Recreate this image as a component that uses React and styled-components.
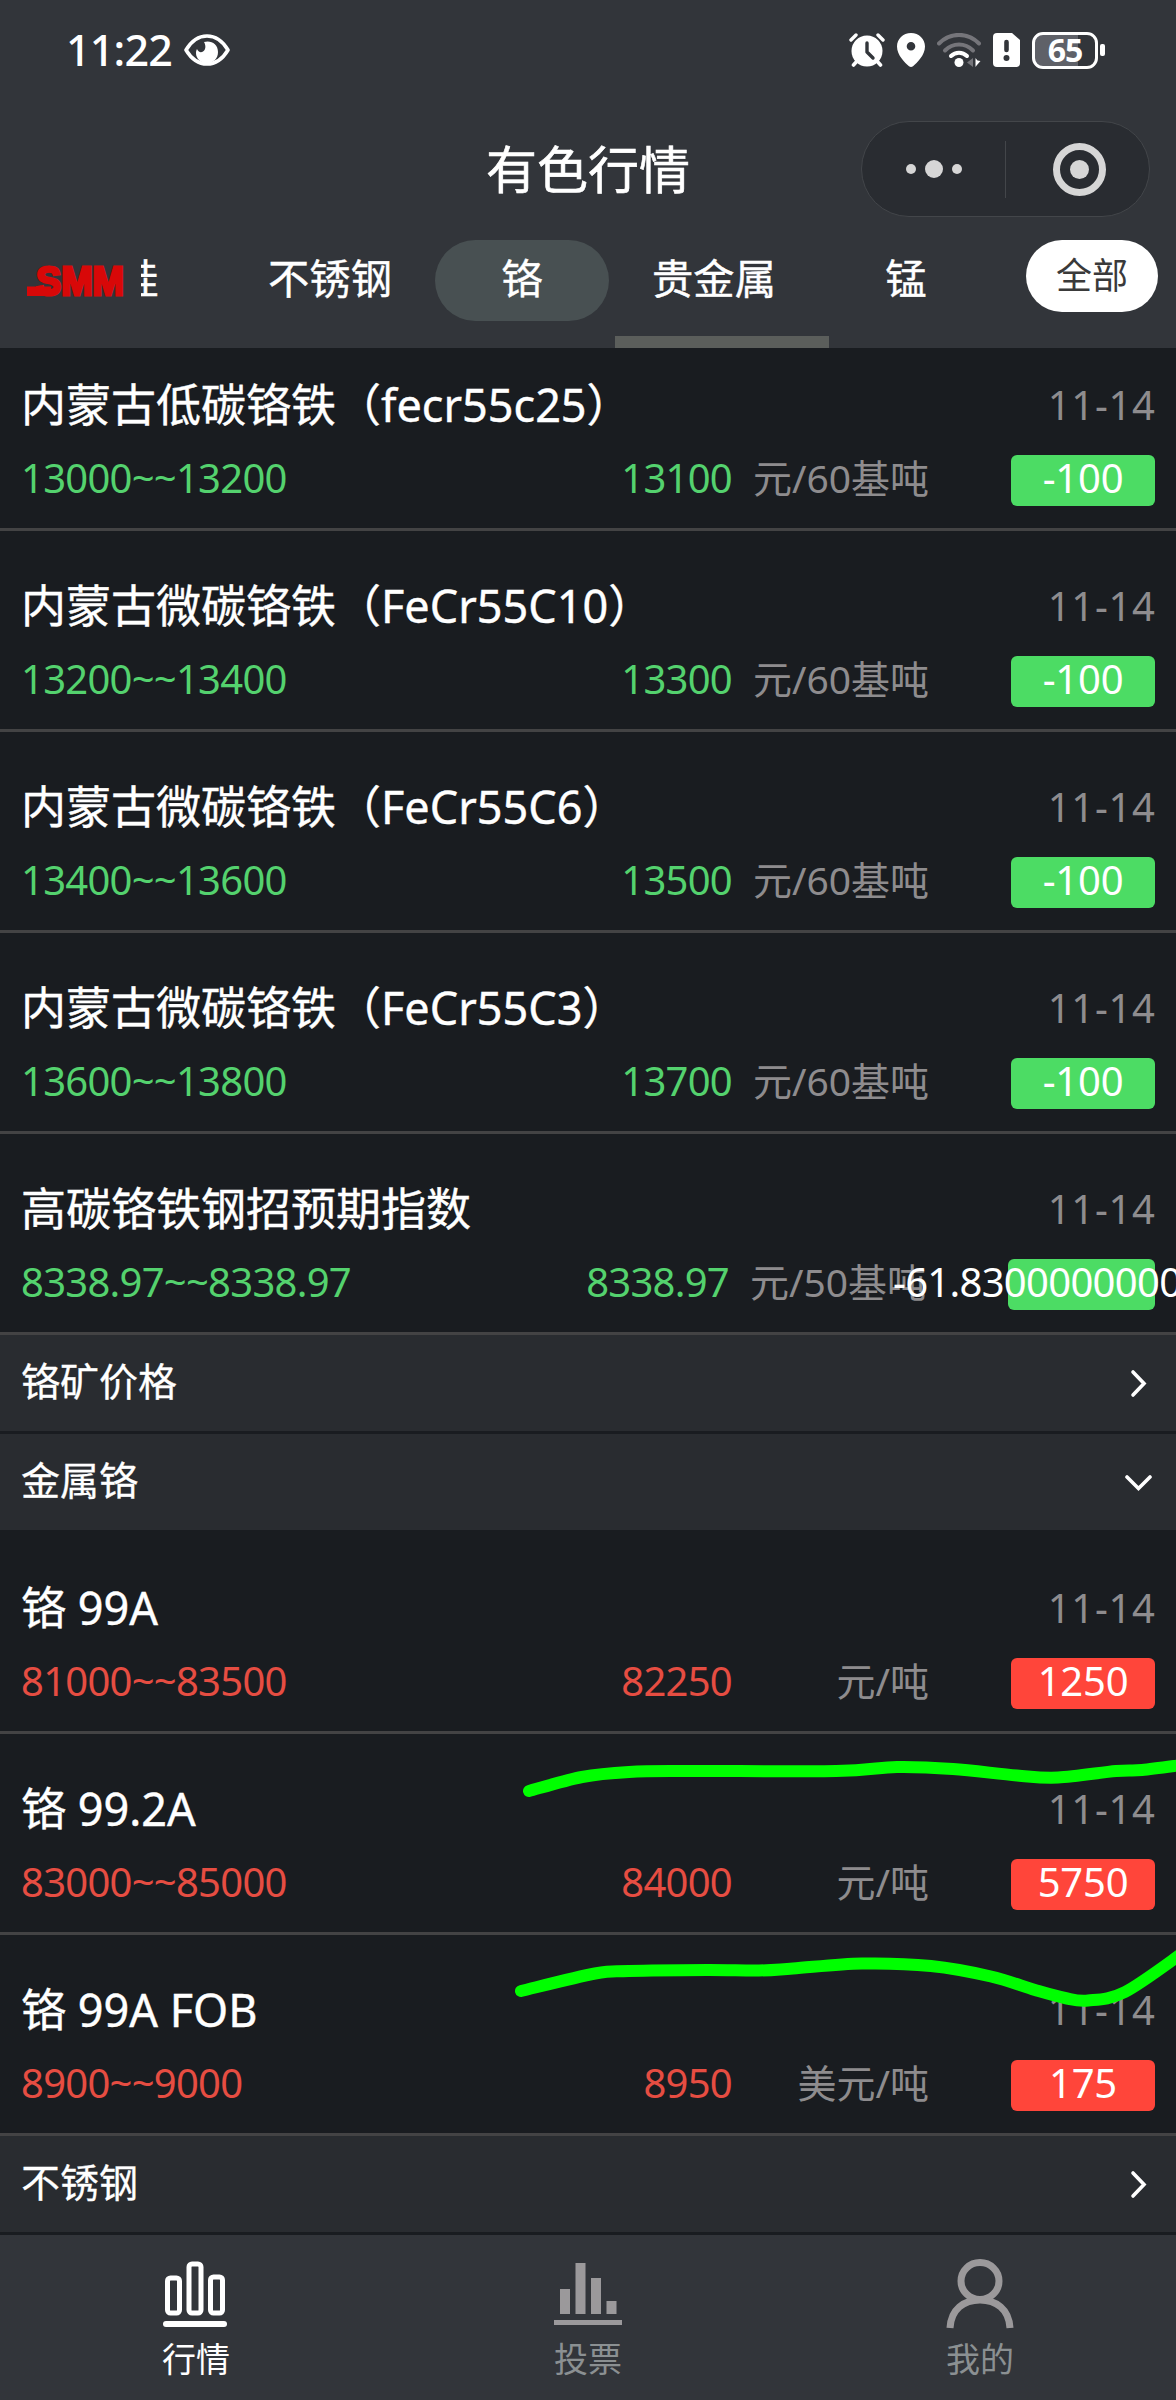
import React from 'react';
import styled, {createGlobalStyle} from 'styled-components';

const GlobalStyle = createGlobalStyle
    `
      * {
        box-sizing: border-box;
      }

      body {
        margin: 0;
        background: #191c20;
        font-family: "Noto Sans", "Noto Sans CJK SC", sans-serif;
      }
    `;

const Screen = styled.div
    `
      position: relative;
      display: flex;
      flex-direction: column;
      width: 1176px;
      height: 2400px;
      overflow: hidden;
      background: #191c20;
      color: #fff;
    `;

const Header = styled.header
    `
      display: flex;
      flex-direction: column;
      flex: none;
      height: 348px;
      background: #32353a;
    `;

const StatusBar = styled.div
    `
      display: flex;
      align-items: center;
      height: 100px;
      padding: 0 71px 0 66px;
    `;

const Clock = styled.span
    `
      width: 118px;
      font-size: 43px;
      font-weight: 500;
      letter-spacing: -0.8px;
      line-height: 100px;
    `;

const StatusIcons = styled.div
    `
      display: flex;
      align-items: center;
      gap: 12px;
      margin-left: auto;
    `;

const Battery = styled.div
    `
      display: flex;
      align-items: center;
      justify-content: center;
      width: 66px;
      height: 37px;
      border: 3px solid #fff;
      border-radius: 11px;
      background: linear-gradient(90deg, #5f6168 72%, transparent 72%);
      font-size: 32px;
      font-weight: 700;
      letter-spacing: -1px;
      line-height: 30px;
    `;

const BatteryGroup = styled.div
    `
      display: flex;
      align-items: center;
      gap: 2px;
    `;

const BatteryTip = styled.div
    `
      width: 5px;
      height: 12px;
      border-radius: 2px;
      background: #fff;
    `;

const TitleBar = styled.div
    `
      display: grid;
      grid-template-columns: 1fr auto 1fr;
      align-items: center;
      height: 138px;
      padding: 0 26px;
    `;

const PageTitle = styled.h1
    `
      grid-column: 2;
      margin: 0;
      font-size: 51px;
      font-weight: 400;
      line-height: 70px;
      -webkit-text-stroke: 0.6px #fff;
    `;

const Capsule = styled.div
    `
      display: flex;
      align-items: center;
      justify-self: end;
      width: 289px;
      height: 96px;
      border: 1px solid #43464a;
      border-radius: 48px;
      background: #292c31;
    `;

const CapsuleButton = styled.div
    `
      display: flex;
      flex: 1;
      align-items: center;
      justify-content: center;
      gap: 9px;
    `;

const CapsuleDivider = styled.div
    `
      width: 1px;
      height: 57px;
      background: #43464a;
    `;

const Dot = styled.span
    `
      width: ${({$size}) => $size}px;
      height: ${({$size}) => $size}px;
      border-radius: 50%;
      background: #d6d6d6;
    `;

const Ring = styled.span
    `
      display: flex;
      align-items: center;
      justify-content: center;
      width: 53px;
      height: 53px;
      margin-left: 4px;
      border: 7px solid #d6d6d6;
      border-radius: 50%;
    `;

const Navigation = styled.nav
    `
      display: flex;
      height: 110px;
      padding: 2px 18px 0 27px;
    `;

const TabViewport = styled.div
    `
      width: 867px;
      margin-left: 14px;
      overflow: hidden;
    `;

const TabStrip = styled.div
    `
      display: flex;
      width: 960px;
      margin-left: -99px;
    `;

const Tab = styled.div
    `
      flex: none;
      width: 174px;
      height: 81px;
      margin: 0 9px;
      border-radius: 41px;
      background: ${({$active}) => $active ? '#485052' : 'transparent'};
      font-size: 41.300px;
      line-height: 76px;
      text-align: center;
      white-space: nowrap;
      -webkit-text-stroke: 0.4px #fff;
    `;

const TabIndicator = styled.div
    `
      width: 214px;
      height: 12px;
      margin-top: 15px;
      margin-left: 474px;
      background: #5b5e5b;
    `;

const AllButton = styled.button
    `
      width: 132px;
      height: 72px;
      margin-left: 18px;
      padding: 0;
      border: 0;
      border-radius: 36px;
      background: #fff;
      color: #3a3a3a;
      font-family: inherit;
      font-size: 36px;
      line-height: 68px;
    `;

const List = styled.main
    `
      flex: none;
      height: 1887px;
      overflow: hidden;
    `;

// the list is scrolled a little, so the first quote starts under the header
const ListContent = styled.div
    `
      margin-top: -18px;
    `;

const Quote = styled.section
    `
      display: flex;
      flex-direction: column;
      height: 201px;
      padding: 44px 21px 0;
      border-bottom: 3px solid #434344;
    `;

const QuoteHead = styled.div
    `
      display: flex;
      align-items: center;
      justify-content: space-between;
      height: 61px;
    `;

const QuoteName = styled.h2
    `
      margin: 0;
      font-size: 45px;
      font-weight: 400;
      line-height: 61px;
      white-space: nowrap;
      -webkit-text-stroke: 0.4px #fff;
    `;

const QuoteDate = styled.span
    `
      margin-right: -0.7px;
      color: #8e8c8e;
      font-size: 40px;
      letter-spacing: 0.7px;
      line-height: 58px;
    `;

const QuoteBody = styled.div
    `
      display: grid;
      grid-template-columns: 430px ${({$wide}) => $wide ? 278 : 281}px 197px 1fr;
      align-items: center;
      height: 51px;
      margin-top: 20px;
    `;

const Amount = styled.span
    `
      height: 51px;
      color: ${({$up}) => $up ? '#e64d42' : '#54d26e'};
      font-size: 40px;
      letter-spacing: -0.74px;
      line-height: 46px;
      text-align: ${({$align}) => $align || 'left'};
      white-space: nowrap;
    `;

const Unit = styled.span
    `
      height: 51px;
      color: #8e8c8e;
      font-size: 39px;
      line-height: 45px;
      text-align: right;
      white-space: nowrap;
    `;

const Change = styled.span
    `
      display: flex;
      justify-content: center;
      justify-self: end;
      width: ${({$wide}) => $wide ? 147 : 144}px;
      height: 51px;
      border-radius: 6px;
      background: ${({$up}) => $up ? '#ff453a' : '#4cdc64'};
      font-size: 40px;
      letter-spacing: ${({$wide}) => $wide ? -0.7 : -0.2}px;
      line-height: 46px;
      white-space: nowrap;
    `;

const Group = styled.div
    `
      display: flex;
      align-items: center;
      justify-content: space-between;
      height: 96px;
      margin-bottom: 3px;
      padding: 0 21px;
      background: #292c30;
    `;

const GroupName = styled.h3
    `
      height: 96px;
      margin: 0;
      font-size: 39px;
      font-weight: 400;
      line-height: 91px;
      -webkit-text-stroke: 0.3px #fff;
    `;

const TabBar = styled.footer
    `
      display: flex;
      flex: 1;
      background: #32353a;
    `;

const TabBarItem = styled.div
    `
      display: flex;
      flex: 1;
      flex-direction: column;
      align-items: center;
      padding-top: 24px;
      color: ${({$active}) => $active ? '#fff' : '#8b9092'};
      font-size: 34px;
      line-height: 60px;
    `;

const Marker = styled.svg
    `
      position: absolute;
      top: 1740px;
      left: 500px;
      pointer-events: none;
    `;

const tabs = ['硅', '不锈钢', '铬', '贵金属', '锰'];

const chromeAlloys = [
    {name: '内蒙古低碳铬铁（fecr55c25）', range: '13000~~13200', price: '13100', unit: '元/60基吨', change: '-100'},
    {name: '内蒙古微碳铬铁（FeCr55C10）', range: '13200~~13400', price: '13300', unit: '元/60基吨', change: '-100'},
    {name: '内蒙古微碳铬铁（FeCr55C6）', range: '13400~~13600', price: '13500', unit: '元/60基吨', change: '-100'},
    {name: '内蒙古微碳铬铁（FeCr55C3）', range: '13600~~13800', price: '13700', unit: '元/60基吨', change: '-100'},
    {
        name: '高碳铬铁钢招预期指数', range: '8338.97~~8338.97', price: '8338.97', unit: '元/50基吨',
        change: '-61.83000000000000', wide: true,
    },
];

const chromeMetals = [
    {name: '铬 99A', range: '81000~~83500', price: '82250', unit: '元/吨', change: '1250', up: true},
    {name: '铬 99.2A', range: '83000~~85000', price: '84000', unit: '元/吨', change: '5750', up: true},
    {name: '铬 99A FOB', range: '8900~~9000', price: '8950', unit: '美元/吨', change: '175', up: true},
];

const strokes = [
    [[529, 1791], [582, 1777], [629, 1772], [685, 1771], [836, 1771], [897, 1767], [953, 1769], [1017, 1775.5],
        [1058, 1777.5], [1116, 1771], [1142, 1770], [1182, 1765]],
    [[521, 1991], [595, 1973.5], [629, 1971], [707, 1970], [759, 1970.5], [793, 1968.5], [862, 1963.5], [931, 1966],
        [991, 1976.5], [1035, 1990], [1065, 1998], [1088, 2000.5], [1125, 1992], [1184, 1952]],
];

function smoothPath(points) {
    let d = `M${points[0][0]} ${points[0][1]}`;
    for (let i = 0; i < points.length - 1; i++) {
        const p0 = points[i - 1] || points[i];
        const p1 = points[i];
        const p2 = points[i + 1];
        const p3 = points[i + 2] || p2;
        d += ` C${p1[0] + (p2[0] - p0[0]) / 6} ${p1[1] + (p2[1] - p0[1]) / 6}`
            + ` ${p2[0] - (p3[0] - p1[0]) / 6} ${p2[1] - (p3[1] - p1[1]) / 6} ${p2[0]} ${p2[1]}`;
    }
    return d;
}

function EyeIcon() {
    return (
        <svg width="46" height="32" viewBox="0 0 46 32" fill="none">
            <path d="M2 16C8 6 15 2 23 2s15 4 21 14c-6 10-13 14-21 14S8 26 2 16z" stroke="#fff" strokeWidth="3.6"
                  strokeLinejoin="round"/>
            <path d="M20 8c7-2 14 2 14 10 0 7-5 11-11 11s-11-4-11-10c0-2 .5-3 1-4 1 3 4 4 6 2.500 3-2 3-6 1-9.500z"
                  fill="#fff"/>
        </svg>
    );
}

function AlarmIcon() {
    return (
        <svg width="36" height="34" viewBox="0 0 36 34" fill="none" strokeLinecap="round">
            <path d="M2 7l5-5M34 7l-5-5" stroke="#fff" strokeWidth="3.400"/>
            <path d="M9 27l-4.500 5M27 27l4.500 5" stroke="#fff" strokeWidth="3.600"/>
            <circle cx="18" cy="18" r="15.500" fill="#fff"/>
            <path d="M18 10v9l6 6" stroke="#32353a" strokeWidth="3.400" strokeLinejoin="round"/>
        </svg>
    );
}

function LocationIcon() {
    return (
        <svg width="28" height="34" viewBox="0 0 28 34">
            <path fillRule="evenodd" fill="#fff"
                  d="M14 0c8 0 14 6 14 13.500C28 22 20 30 16 33.300q-2 1.400-4 0C8 30 0 22 0 13.500 0 6 6 0 14 0zm0 9a4.300 4.300 0 1 0 0 8.600 4.300 4.300 0 0 0 0-8.600z"/>
        </svg>
    );
}

function WifiIcon() {
    return (
        <svg width="44" height="34" viewBox="0 0 44 34" fill="none" strokeLinecap="round" strokeWidth="4">
            <path d="M2 10.500C13-1 31-1 42 10.500" stroke="#75757a"/>
            <path d="M8 17.500c8-8 20-8 28 0" stroke="#75757a"/>
            <path d="M14 23c4.500-4.500 11.500-4.500 16 0" stroke="#fff"/>
            <circle cx="22" cy="29.500" r="4.500" fill="#fff"/>
            <path d="M36 25v9l-6-4.500z" fill="#75757a"/>
            <path d="M38.500 25v9l1.500-2 3.500-4-3-.500z" fill="#fff"/>
        </svg>
    );
}

function SimIcon() {
    return (
        <svg width="27" height="34" viewBox="0 0 27 34" fill="none">
            <path d="M4 0h15l8 7v23a4 4 0 0 1-4 4H4a4 4 0 0 1-4-4V4a4 4 0 0 1 4-4z" fill="#fff"/>
            <path d="M13.500 9v8" stroke="#32353a" strokeWidth="4.600" strokeLinecap="round"/>
            <circle cx="13.500" cy="25" r="3" fill="#32353a"/>
        </svg>
    );
}

function Logo() {
    return (
        <svg width="100" height="81" viewBox="0 0 100 81">
            <rect x="0" y="46.500" width="24" height="9.500" fill="#d80808"/>
            <text x="9" y="54.500" textLength="88" lengthAdjust="spacingAndGlyphs" fill="#d80808" stroke="#d80808"
                  strokeWidth="3" fontFamily="Liberation Sans" fontWeight="700" fontSize="40">SMM
            </text>
        </svg>
    );
}

function Chevron({open}) {
    return open ? (
        <svg width="30" height="30" viewBox="0 0 30 30" fill="none" stroke="#fff" strokeWidth="3.600"
             strokeLinecap="round">
            <path d="M2 10l11.500 11.500L25 10"/>
        </svg>
    ) : (
        <svg width="30" height="30" viewBox="0 0 30 30" fill="none" stroke="#fff" strokeWidth="3.600"
             strokeLinecap="round">
            <path d="M8 4l11 11.500L8 27"/>
        </svg>
    );
}

function MarketIcon() {
    return (
        <svg width="68" height="70" viewBox="0 0 68 70" fill="none" stroke="#fff" strokeWidth="5">
            <rect x="5.500" y="19" width="12" height="35" rx="3"/>
            <rect x="27" y="5" width="12" height="49" rx="3"/>
            <rect x="48.500" y="18" width="12" height="36" rx="3"/>
            <path d="M4 65h58" strokeWidth="6" strokeLinecap="round"/>
        </svg>
    );
}

function VoteIcon() {
    return (
        <svg width="68" height="70" viewBox="0 0 68 70" fill="#9b999b">
            <rect x="6" y="30" width="10" height="25"/>
            <rect x="21.500" y="4" width="10" height="51"/>
            <rect x="37" y="19" width="10" height="36"/>
            <rect x="52.500" y="42" width="10" height="13"/>
            <rect x="0" y="61" width="68" height="5"/>
        </svg>
    );
}

function UserIcon() {
    return (
        <svg width="68" height="70" viewBox="0 0 68 70" fill="none" stroke="#9b999b" strokeWidth="7">
            <ellipse cx="34" cy="22" rx="19" ry="18.500"/>
            <path d="M4 69C5 50 18 41 34 41s29 9 30 28"/>
        </svg>
    );
}

function QuoteRow({name, range, price, unit, change, up, wide}) {
    return (
        <Quote>
            <QuoteHead>
                <QuoteName>{name}</QuoteName>
                <QuoteDate>11-14</QuoteDate>
            </QuoteHead>
            <QuoteBody $wide={wide}>
                <Amount $up={up}>{range}</Amount>
                <Amount $up={up} $align="right">{price}</Amount>
                <Unit>{unit}</Unit>
                <Change $up={up} $wide={wide}>{change}</Change>
            </QuoteBody>
        </Quote>
    );
}

function GroupRow({label, open}) {
    return (
        <Group>
            <GroupName>{label}</GroupName>
            <Chevron open={open}/>
        </Group>
    );
}

function App() {
    return (
        <Screen>
            <GlobalStyle/>
            <Header>
                <StatusBar>
                    <Clock>11:22</Clock>
                    <EyeIcon/>
                    <StatusIcons>
                        <AlarmIcon/>
                        <LocationIcon/>
                        <WifiIcon/>
                        <SimIcon/>
                        <BatteryGroup>
                            <Battery>65</Battery>
                            <BatteryTip/>
                        </BatteryGroup>
                    </StatusIcons>
                </StatusBar>
                <TitleBar>
                    <PageTitle>有色行情</PageTitle>
                    <Capsule>
                        <CapsuleButton>
                            <Dot $size={10}/>
                            <Dot $size={18}/>
                            <Dot $size={10}/>
                        </CapsuleButton>
                        <CapsuleDivider/>
                        <CapsuleButton>
                            <Ring>
                                <Dot $size={19}/>
                            </Ring>
                        </CapsuleButton>
                    </Capsule>
                </TitleBar>
                <Navigation>
                    <Logo/>
                    <TabViewport>
                        <TabStrip>
                            {tabs.map((tab) => <Tab key={tab} $active={tab === '铬'}>{tab}</Tab>)}
                        </TabStrip>
                        <TabIndicator/>
                    </TabViewport>
                    <AllButton>全部</AllButton>
                </Navigation>
            </Header>
            <List>
                <ListContent>
                    {chromeAlloys.map((quote) => <QuoteRow key={quote.name} {...quote}/>)}
                    <GroupRow label="铬矿价格"/>
                    <GroupRow label="金属铬" open/>
                    {chromeMetals.map((quote) => <QuoteRow key={quote.name} {...quote}/>)}
                    <GroupRow label="不锈钢"/>
                </ListContent>
            </List>
            <TabBar>
                <TabBarItem $active>
                    <MarketIcon/>
                    行情
                </TabBarItem>
                <TabBarItem>
                    <VoteIcon/>
                    投票
                </TabBarItem>
                <TabBarItem>
                    <UserIcon/>
                    我的
                </TabBarItem>
            </TabBar>
            <Marker width="676" height="280" viewBox="500 1740 676 280" fill="none" stroke="#00ff00" strokeWidth="12"
                    strokeLinecap="round">
                {strokes.map((points, index) => <path key={index} d={smoothPath(points)}/>)}
            </Marker>
        </Screen>
    );
}

export default App;
